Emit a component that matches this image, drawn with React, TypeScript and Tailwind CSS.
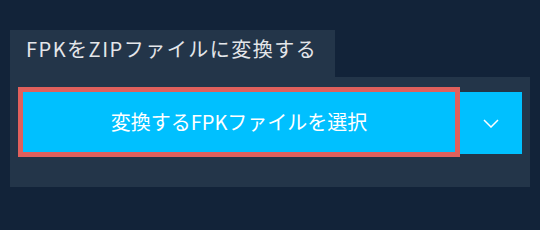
import React from "react";

export default function App() {
  return (
    <div
      className="w-[540px] h-[230px] bg-[#122339] pt-[30px] pl-[10px]"
      style={{ fontFamily: '"Noto Sans CJK JP", "Noto Sans", sans-serif' }}
    >
      <div className="w-[325px] h-[47px] bg-[#233549] pl-[16px] pt-[5px]">
        <span className="text-[20px] leading-[28px] tracking-[1.5px] text-[#e4e6ea]">FPKをZIPファイルに変換する</span>
      </div>
      <div className="w-[520px] h-[110px] bg-[#233549] pt-[10px] pl-[8px] flex items-start">
        <div className="w-[442px] h-[70px] border-[5px] border-[#e0605c] bg-[#00c0ff] flex items-center justify-center">
          <span className="text-[20px] leading-[28px] text-white">変換するFPKファイルを選択</span>
        </div>
        <div className="w-[62px] h-[62px] mt-[5px] bg-[#00c0ff] flex items-center justify-center">
          <svg width="16" height="9" viewBox="0 0 16 9" fill="none">
            <path d="M1 1 L8 8 L15 1" stroke="white" strokeWidth="1.5" />
          </svg>
        </div>
      </div>
    </div>
  );
}
